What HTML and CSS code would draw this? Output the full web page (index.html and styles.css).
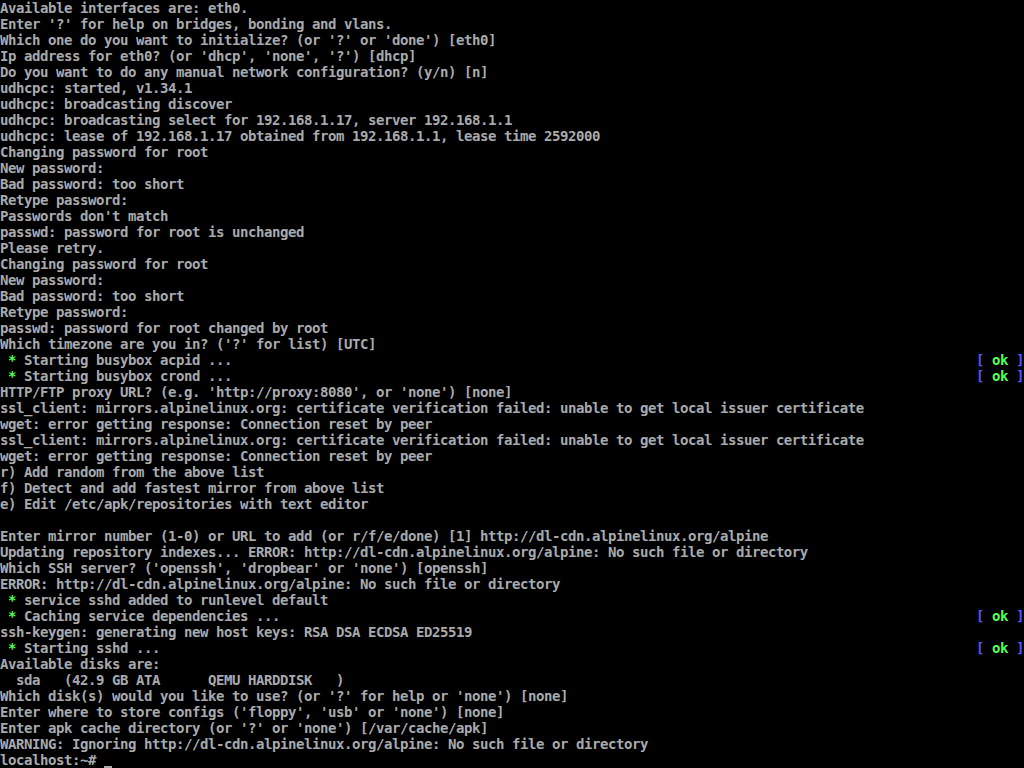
FILE: index.html
```html
<!DOCTYPE html>
<html>
<head>
<meta charset="utf-8">
<link rel="stylesheet" href="styles.css">
</head>
<body>
<div class="console">
<div class="ln">Available interfaces are: eth0.</div>
<div class="ln">Enter '?' for help on bridges, bonding and vlans.</div>
<div class="ln">Which one do you want to initialize? (or '?' or 'done') [eth0]</div>
<div class="ln">Ip address for eth0? (or 'dhcp', 'none', '?') [dhcp]</div>
<div class="ln">Do you want to do any manual network configuration? (y/n) [n]</div>
<div class="ln">udhcpc: started, v1.34.1</div>
<div class="ln">udhcpc: broadcasting discover</div>
<div class="ln">udhcpc: broadcasting select for 192.168.1.17, server 192.168.1.1</div>
<div class="ln">udhcpc: lease of 192.168.1.17 obtained from 192.168.1.1, lease time 2592000</div>
<div class="ln">Changing password for root</div>
<div class="ln">New password:</div>
<div class="ln">Bad password: too short</div>
<div class="ln">Retype password:</div>
<div class="ln">Passwords don't match</div>
<div class="ln">passwd: password for root is unchanged</div>
<div class="ln">Please retry.</div>
<div class="ln">Changing password for root</div>
<div class="ln">New password:</div>
<div class="ln">Bad password: too short</div>
<div class="ln">Retype password:</div>
<div class="ln">passwd: password for root changed by root</div>
<div class="ln">Which timezone are you in? ('?' for list) [UTC]</div>
<div class="ln row"><span> <span class="g">*</span> Starting busybox acpid ...</span><span class="st"><span class="b">[</span> <span class="g">ok</span> <span class="b">]</span></span></div>
<div class="ln row"><span> <span class="g">*</span> Starting busybox crond ...</span><span class="st"><span class="b">[</span> <span class="g">ok</span> <span class="b">]</span></span></div>
<div class="ln">HTTP/FTP proxy URL? (e.g. 'http://proxy:8080', or 'none') [none]</div>
<div class="ln">ssl_client: mirrors.alpinelinux.org: certificate verification failed: unable to get local issuer certificate</div>
<div class="ln">wget: error getting response: Connection reset by peer</div>
<div class="ln">ssl_client: mirrors.alpinelinux.org: certificate verification failed: unable to get local issuer certificate</div>
<div class="ln">wget: error getting response: Connection reset by peer</div>
<div class="ln">r) Add random from the above list</div>
<div class="ln">f) Detect and add fastest mirror from above list</div>
<div class="ln">e) Edit /etc/apk/repositories with text editor</div>
<div class="ln"> </div>
<div class="ln">Enter mirror number (1-0) or URL to add (or r/f/e/done) [1] http://dl-cdn.alpinelinux.org/alpine</div>
<div class="ln">Updating repository indexes... ERROR: http://dl-cdn.alpinelinux.org/alpine: No such file or directory</div>
<div class="ln">Which SSH server? ('openssh', 'dropbear' or 'none') [openssh]</div>
<div class="ln">ERROR: http://dl-cdn.alpinelinux.org/alpine: No such file or directory</div>
<div class="ln"> <span class="g">*</span> service sshd added to runlevel default</div>
<div class="ln row"><span> <span class="g">*</span> Caching service dependencies ...</span><span class="st"><span class="b">[</span> <span class="g">ok</span> <span class="b">]</span></span></div>
<div class="ln">ssh-keygen: generating new host keys: RSA DSA ECDSA ED25519</div>
<div class="ln row"><span> <span class="g">*</span> Starting sshd ...</span><span class="st"><span class="b">[</span> <span class="g">ok</span> <span class="b">]</span></span></div>
<div class="ln">Available disks are:</div>
<div class="ln">  sda   (42.9 GB ATA      QEMU HARDDISK   )</div>
<div class="ln">Which disk(s) would you like to use? (or '?' for help or 'none') [none]</div>
<div class="ln">Enter where to store configs ('floppy', 'usb' or 'none') [none]</div>
<div class="ln">Enter apk cache directory (or '?' or 'none') [/var/cache/apk]</div>
<div class="ln">WARNING: Ignoring http://dl-cdn.alpinelinux.org/alpine: No such file or directory</div>
<div class="ln">localhost:~# <span class="cursor"></span></div>
</div>
</body>
</html>
```
FILE: styles.css
```css
html, body {
  margin: 0;
  padding: 0;
  background: #000;
}
.console {
  width: 1024px;
  height: 768px;
  overflow: hidden;
  background: #000;
  color: #aaaaaa;
  font-family: "DejaVu Sans Mono", "Liberation Mono", monospace;
  font-size: 14px;
  letter-spacing: -0.43px;
  font-weight: bold;
}
.ln {
  height: 16px;
  line-height: 16px;
  white-space: pre;
}
.row {
  display: flex;
  justify-content: space-between;
}
.st {
  width: 48px;
  white-space: pre;
}
.g {
  color: #55ff55;
}
.b {
  color: #5555ff;
}
.cursor {
  display: inline-block;
  width: 8px;
  height: 2px;
  background: #aaaaaa;
  vertical-align: -3px;
}
```
